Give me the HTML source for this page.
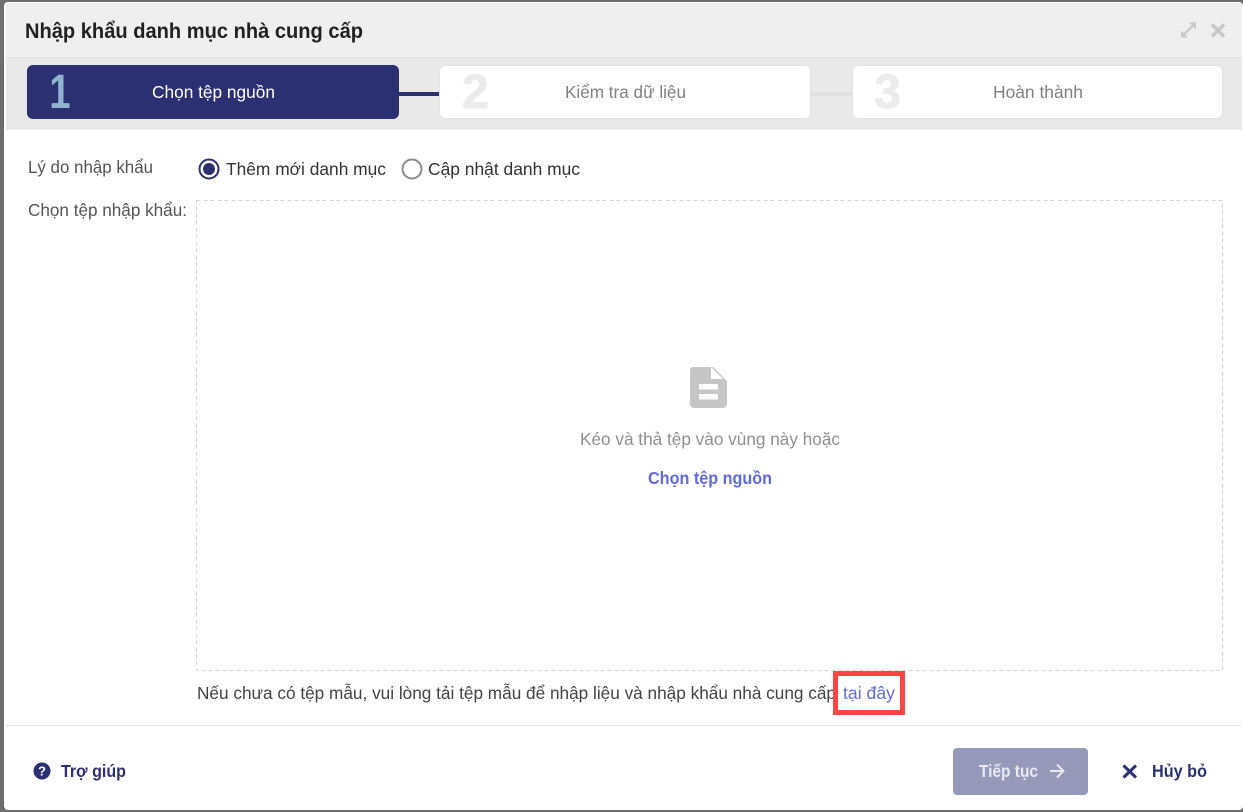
<!DOCTYPE html>
<html lang="vi">
<head>
<meta charset="utf-8">
<title>Nhập khẩu danh mục nhà cung cấp</title>
<style>
html,body{margin:0;padding:0;width:1243px;height:812px;overflow:hidden;background:#6e6e6e}
svg{display:block;position:absolute;left:0;top:0}
text{font-family:"Liberation Sans","Noto Sans CJK SC",sans-serif;white-space:pre}
</style>
</head>
<body>
<svg width="1243" height="812" viewBox="0 0 1243 812" xmlns="http://www.w3.org/2000/svg">
  <rect x="0" y="0" width="1243" height="812" fill="#6e6e6e"/>
  <rect x="4" y="2" width="1239" height="808" rx="4" fill="#fff"/>
  <path d="M6 7a4 4 0 0 1 4-4H1242V57H6Z" fill="#efefef"/>
  <rect x="6" y="57" width="1236" height="1" fill="#e0e0e0"/>
  <rect x="6" y="58" width="1236" height="72" fill="#e9e9e9"/>

  <text x="25" y="38" font-size="21.500" font-weight="700" fill="#212121" textLength="338" lengthAdjust="spacingAndGlyphs">Nhập khẩu danh mục nhà cung cấp</text>

  <!-- window controls -->
  <path d="M1181 37.500V30.500L1188 37.500ZM1196 22.500V29.500L1189 22.500Z" fill="#c8c8c8"/>
  <path d="M1184.500 34 1192.500 26" stroke="#c8c8c8" stroke-width="2.200" fill="none"/>
  <path d="M1212 24.500 1224 36.500M1224 24.500 1212 36.500" stroke="#c8c8c8" stroke-width="3.600" fill="none"/>

  <!-- connectors -->
  <rect x="399" y="92" width="41" height="4" fill="#2b3073"/>
  <rect x="810" y="92" width="42" height="4" fill="#e0e0e0"/>

  <!-- step 1 -->
  <rect x="27" y="65" width="372" height="54" rx="6" fill="#2b3073"/>
  <text x="49.300" y="108" font-size="48" font-weight="700" fill="#8fb3cc" textLength="21.400" lengthAdjust="spacingAndGlyphs">1</text>
  <text x="152" y="98" font-size="17.500" fill="#fff" textLength="123" lengthAdjust="spacingAndGlyphs">Chọn tệp nguồn</text>

  <!-- step 2 -->
  <rect x="439.500" y="65.500" width="371" height="53" rx="6" fill="#fff" stroke="#e2e2e2"/>
  <text x="462" y="108" font-size="48" font-weight="700" fill="#ebebeb" stroke="#ebebeb" stroke-width="0.800" textLength="27" lengthAdjust="spacingAndGlyphs">2</text>
  <text x="565" y="98" font-size="17.500" fill="#808080" textLength="121" lengthAdjust="spacingAndGlyphs">Kiểm tra dữ liệu</text>

  <!-- step 3 -->
  <rect x="852.500" y="65.500" width="370" height="53" rx="6" fill="#fff" stroke="#e2e2e2"/>
  <text x="874" y="108" font-size="48" font-weight="700" fill="#ebebeb" stroke="#ebebeb" stroke-width="0.800" textLength="27" lengthAdjust="spacingAndGlyphs">3</text>
  <text x="993" y="98" font-size="17.500" fill="#808080" textLength="90" lengthAdjust="spacingAndGlyphs">Hoàn thành</text>

  <!-- reason row -->
  <text x="28" y="173" font-size="17.500" fill="#555" textLength="125" lengthAdjust="spacingAndGlyphs">Lý do nhập khẩu</text>
  <circle cx="209" cy="169" r="9.500" fill="#fff" stroke="#2b3073" stroke-width="2"/>
  <circle cx="209" cy="169" r="6" fill="#2b3073"/>
  <text x="226" y="175" font-size="17.500" fill="#333" textLength="160" lengthAdjust="spacingAndGlyphs">Thêm mới danh mục</text>
  <circle cx="412" cy="169" r="9.500" fill="#fff" stroke="#8a8a8a" stroke-width="2"/>
  <text x="428" y="175" font-size="17.500" fill="#333" textLength="152" lengthAdjust="spacingAndGlyphs">Cập nhật danh mục</text>

  <!-- file row -->
  <text x="28" y="216" font-size="17.500" fill="#555" textLength="159" lengthAdjust="spacingAndGlyphs">Chọn tệp nhập khẩu:</text>
  <rect x="196.500" y="200.500" width="1026" height="470" fill="#fff" stroke="#d4d4d4" stroke-dasharray="4 3"/>

  <!-- document icon -->
  <path d="M693 367H713L727 381V404a4 4 0 0 1-4 4H694a4 4 0 0 1-4-4V370a3 3 0 0 1 3-3Z" fill="#c6c6c6"/>
  <path d="M711 367 723 379H711Z" fill="#fff"/>
  <rect x="699" y="384" width="19" height="5.500" fill="#fff"/>
  <rect x="699" y="394" width="19" height="5.500" fill="#fff"/>

  <text x="580" y="445" font-size="17.500" fill="#8f8f8f" textLength="260" lengthAdjust="spacingAndGlyphs">Kéo và thả tệp vào vùng này hoặc</text>
  <text x="648" y="484" font-size="17.500" font-weight="700" fill="#5f6bdc" textLength="124" lengthAdjust="spacingAndGlyphs">Chọn tệp nguồn</text>

  <!-- sample line -->
  <text x="197" y="699" font-size="17.500" fill="#444" textLength="639" lengthAdjust="spacingAndGlyphs">Nếu chưa có tệp mẫu, vui lòng tải tệp mẫu để nhập liệu và nhập khẩu nhà cung cấp</text>
  <text x="843" y="699" font-size="17.500" fill="#5f6bdc" textLength="52" lengthAdjust="spacingAndGlyphs">tại đây</text>
  <rect x="835.500" y="673.500" width="67" height="39" fill="none" stroke="#ff4444" stroke-width="5"/>

  <!-- footer -->
  <rect x="6" y="725" width="1236" height="1" fill="#e0e0e0"/>
  <circle cx="42" cy="771" r="8.500" fill="#2b3073"/>
  <text x="42" y="775.500" font-size="13" font-weight="700" fill="#fff" text-anchor="middle">?</text>
  <text x="61" y="777" font-size="17.500" font-weight="700" fill="#2b3073" textLength="65" lengthAdjust="spacingAndGlyphs">Trợ giúp</text>

  <rect x="953" y="748" width="135" height="47" rx="4" fill="#9799ba"/>
  <text x="979" y="777" font-size="17.500" font-weight="700" fill="#e9e9f2" textLength="59" lengthAdjust="spacingAndGlyphs">Tiếp tục</text>
  <path d="M1050 771H1063M1057 764.500 1063.500 771 1057 777.500" stroke="#e9e9f2" stroke-width="2" fill="none"/>

  <path d="M1123.500 765.500 1136 777.500M1136 765.500 1123.500 777.500" stroke="#2b3073" stroke-width="3" fill="none"/>
  <text x="1152" y="777" font-size="17.500" font-weight="700" fill="#2b3073" textLength="55" lengthAdjust="spacingAndGlyphs">Hủy bỏ</text>
</svg>
</body>
</html>
